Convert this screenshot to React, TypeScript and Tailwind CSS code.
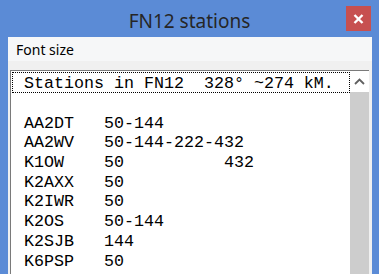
import React from "react";

const rows = [
  " Stations in FN12  328° ~274 kM.",
  "",
  " AA2DT   50-144",
  " AA2WV   50-144-222-432",
  " K1OW    50          432",
  " K2AXX   50",
  " K2IWR   50",
  " K2OS    50-144",
  " K2SJB   144",
  " K6PSP   50",
];

export default function App() {
  return (
    <div className="relative w-[379px] h-[274px] overflow-hidden bg-[#5b8bd6] flex flex-col">
      {/* Title bar */}
      <div className="h-[37px] shrink-0 flex items-center justify-center pt-[5px]">
        <span className="text-[19px] text-[#262626] font-['Noto_Sans',sans-serif] leading-none">
          FN12 stations
        </span>
      </div>
      <button className="absolute left-[346px] top-[6px] w-[25px] h-[25px] bg-[#c75050] flex items-center justify-center">
        <svg width="11" height="10" viewBox="0 0 11 10">
          <path d="M1.5 1 L9.5 9 M9.5 1 L1.5 9" stroke="#fff" strokeWidth="2.4" />
        </svg>
      </button>

      {/* Client area */}
      <div className="ml-[8px] mr-[7px] flex-1 bg-[#f0f0f0] flex flex-col">
        <div className="h-[24px] shrink-0 bg-[#f6f7f8] pl-[8px] flex items-center">
          <span className="text-[14px] text-black font-['Noto_Sans',sans-serif]">Font size</span>
        </div>

        <div className="mt-[9px] ml-[2px] mr-[3px] flex-1 flex border-l border-t border-[#7a7a7a] bg-white">
          <div className="flex-1 pl-[1px] pt-[1px] font-['Liberation_Mono',monospace] text-[16.67px] text-black">
            {rows.map((r, i) => (
              <div
                key={i}
                className={
                  i === 0
                    ? "h-[21px] leading-[22px] whitespace-pre pl-[1px] border border-dotted border-black"
                    : "h-[19.7px] leading-[22px] whitespace-pre pl-[2px]"
                }
              >
                {r}
              </div>
            ))}
          </div>
          <div className="w-[19px] flex flex-col">
            <div className="h-[21px] bg-white flex items-center justify-center">
              <svg width="11" height="7" viewBox="0 0 11 7">
                <path d="M1 6 L5.5 1.5 L10 6" stroke="#606060" strokeWidth="1.8" fill="none" />
              </svg>
            </div>
            <div className="flex-1 bg-[#cdcdcd]" />
          </div>
        </div>
      </div>
    </div>
  );
}
